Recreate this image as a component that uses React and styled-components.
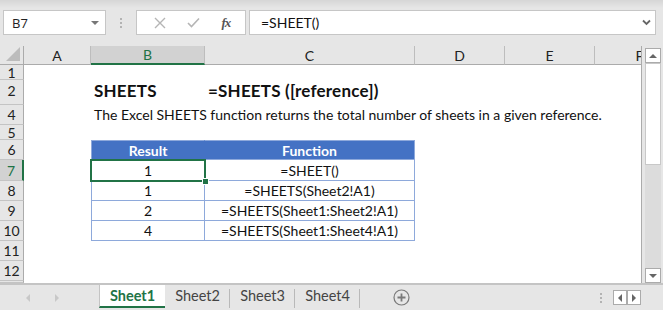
import React from 'react'
import styled, { createGlobalStyle } from 'styled-components'

const COLS = '24px 67px 114px 210px 90px 90px 90px'
const GREEN = '#217346'
const CELL_FONT = 'Lato, "Open Sans", sans-serif'
const UI_FONT = '"Open Sans", "Noto Sans", sans-serif'

const GlobalStyle = createGlobalStyle`
  html, body {
    margin: 0;
    padding: 0;
    background: #e6e6e6;
    overflow: hidden;
  }
`

const Window = styled.div`
  width: 663px;
  height: 310px;
  display: flex;
  flex-direction: column;
  background: #e6e6e6;
  font-family: ${CELL_FONT};
  overflow: hidden;
`

const FormulaBar = styled.div`
  height: 46px;
  box-sizing: border-box;
  padding-top: 10px;
  display: flex;
  align-items: flex-start;
  background: linear-gradient(#d6d6d6 0px, #e6e6e6 8px);
`

const Box = styled.div`
  height: 25px;
  box-sizing: border-box;
  background: #fff;
  border: 1px solid #c6c6c6;
  display: flex;
  align-items: center;
`

const NameBox = styled(Box)`
  margin-left: 3px;
  width: 103px;
  padding: 0 6px 0 8px;
  justify-content: space-between;
  font-family: ${UI_FONT};
  font-size: 13px;
  color: #222;
`

const Caret = styled.span`
  width: 0;
  height: 0;
  border-left: 4px solid transparent;
  border-right: 4px solid transparent;
  border-top: 4px solid #777;
`

const Grip = styled.div`
  width: 30px;
  height: 25px;
  display: flex;
  flex-direction: column;
  align-items: center;
  justify-content: center;
  gap: 2px;
  span {
    width: 2px;
    height: 2px;
    background: #b3b3b3;
  }
`

const ButtonsBox = styled(Box)`
  width: 110px;
  margin-right: 3px;
  justify-content: space-around;
  padding: 0 4px 0 6px;
`

const Fx = styled.span`
  font-family: "Liberation Serif", serif;
  font-style: italic;
  font-weight: bold;
  font-size: 13px;
  color: #555;
  letter-spacing: -1px;
`

const FormulaInput = styled(Box)`
  width: 407px;
  padding: 0 4px 0 11px;
  justify-content: space-between;
  font-family: ${CELL_FONT};
  font-size: 14px;
  color: #111;
`

const SheetArea = styled.div`
  height: 237px;
  display: flex;
`

const Grid = styled.div`
  width: 642px;
  height: 237px;
  overflow: hidden;
  background: #fff;
  border-right: 1px solid #ababab;
  box-sizing: border-box;
`

const Row = styled.div`
  display: grid;
  grid-template-columns: ${COLS};
  height: ${({ $h }) => $h}px;
`

const HeaderRow = styled(Row)`
  background: #e6e6e6;
`

const Corner = styled.div`
  border-right: 1px solid #ababab;
  border-bottom: 1px solid #ababab;
  display: flex;
  align-items: flex-end;
  justify-content: flex-end;
  padding: 0 3px 3px 0;
`

const ColHead = styled.div`
  display: flex;
  align-items: center;
  justify-content: center;
  font-size: 14px;
  color: ${({ $active }) => ($active ? GREEN : '#222')};
  background: ${({ $active }) => ($active ? '#d2d2d2' : '#e6e6e6')};
  border-right: 1px solid #bdbdbd;
  border-bottom: ${({ $active }) => ($active ? `2px solid ${GREEN}` : '1px solid #ababab')};
  box-sizing: border-box;
`

const RowHead = styled.div`
  display: flex;
  align-items: center;
  justify-content: center;
  font-size: 14px;
  overflow: hidden;
  color: ${({ $active }) => ($active ? GREEN : '#222')};
  background: ${({ $active }) => ($active ? '#d2d2d2' : '#e6e6e6')};
  border-right: ${({ $active }) => ($active ? `2px solid ${GREEN}` : '1px solid #ababab')};
  border-bottom: 1px solid #c4c4c4;
  box-sizing: border-box;
`

const Cell = styled.div`
  grid-column: ${({ $col, $span }) => `${$col} / span ${$span || 1}`};
  display: flex;
  align-items: flex-end;
  padding: 0 0 ${({ $big }) => ($big ? 1 : 2)}px 3px;
  white-space: nowrap;
  font-size: ${({ $big }) => ($big ? '17px' : '14px')};
  font-weight: ${({ $big }) => ($big ? 700 : 400)};
  letter-spacing: ${({ $big }) => ($big ? '0.2px' : 'normal')};
  color: #111;
`

const TableCell = styled.div`
  grid-column: ${({ $col }) => $col};
  position: relative;
  display: flex;
  align-items: center;
  justify-content: center;
  font-size: 14px;
  white-space: nowrap;
  box-sizing: border-box;
  border-right: 1px solid ${({ $head, $col }) => ($head && $col === 3 ? '#4472c4' : '#8ea9db')};
  border-bottom: 1px solid #8ea9db;
  border-left: ${({ $col }) => ($col === 3 ? '1px solid #8ea9db' : 'none')};
  border-top: ${({ $head }) => ($head ? '1px solid #8ea9db' : 'none')};
  background: ${({ $head }) => ($head ? '#4472c4' : '#fff')};
  color: ${({ $head }) => ($head ? '#fff' : '#111')};
  font-weight: ${({ $head }) => ($head ? 700 : 400)};
`

const Selection = styled.div`
  position: absolute;
  z-index: 2;
  left: -2px;
  top: -1px;
  right: -2px;
  bottom: -2px;
  border: 2px solid ${GREEN};
  pointer-events: none;
`

const Handle = styled.div`
  position: absolute;
  right: -5px;
  bottom: -5px;
  width: 5px;
  height: 5px;
  background: ${GREEN};
  border: 1px solid #fff;
`

const VScroll = styled.div`
  width: 21px;
  display: flex;
  flex-direction: column;
  padding: 2px 0 0 3px;
  box-sizing: border-box;
`

const ScrollTrack = styled.div`
  width: 16px;
  flex: 1;
  display: flex;
  flex-direction: column;
  background: #dcdcdc;
`

const ScrollBtn = styled.div`
  width: ${({ $w }) => $w || 16}px;
  height: ${({ $h }) => $h || 15}px;
  box-sizing: border-box;
  background: #fff;
  border: 1px solid #ababab;
  display: flex;
  align-items: center;
  justify-content: center;
`

const Thumb = styled.div`
  height: 102px;
  background: #fff;
  border: 1px solid #c8c8c8;
  box-sizing: border-box;
`

const Spacer = styled.div`
  flex: 1;
`

const Tri = styled.span`
  width: 0;
  height: 0;
  ${({ $dir, $c = '#777', $s = 4 }) =>
    $dir === 'up'
      ? `border-left:${$s}px solid transparent;border-right:${$s}px solid transparent;border-bottom:${$s}px solid ${$c};`
      : $dir === 'down'
      ? `border-left:${$s}px solid transparent;border-right:${$s}px solid transparent;border-top:${$s}px solid ${$c};`
      : $dir === 'left'
      ? `border-top:${$s}px solid transparent;border-bottom:${$s}px solid transparent;border-right:${$s}px solid ${$c};`
      : `border-top:${$s}px solid transparent;border-bottom:${$s}px solid transparent;border-left:${$s}px solid ${$c};`}
`

const TabBar = styled.div`
  height: 27px;
  display: flex;
  align-items: stretch;
  border-top: 2px solid #c4c4c4;
  box-sizing: border-box;
  font-family: ${CELL_FONT};
`

const TabNav = styled.div`
  width: 99px;
  display: flex;
  align-items: center;
  gap: 25px;
  padding-left: 26px;
  box-sizing: border-box;
`

const Tab = styled.div`
  width: ${({ $active }) => ($active ? 66 : 65)}px;
  box-sizing: border-box;
  display: flex;
  align-items: center;
  justify-content: center;
  font-size: 14.5px;
  margin-bottom: 2px;
  color: ${({ $active }) => ($active ? GREEN : '#444')};
  font-weight: ${({ $active }) => ($active ? 700 : 400)};
  background: ${({ $active }) => ($active ? '#fff' : 'transparent')};
  border-bottom: 2px solid ${({ $active }) => ($active ? GREEN : 'transparent')};
  border-left: ${({ $active }) => ($active ? '1px solid #c4c4c4' : 'none')};
  position: relative;
  &::after {
    content: '';
    display: ${({ $active }) => ($active ? 'none' : 'block')};
    position: absolute;
    right: 0;
    top: 4px;
    bottom: -2px;
    width: 1px;
    background: #b9b9b9;
  }
`

const AddSheet = styled.div`
  margin-left: 33px;
  display: flex;
  align-items: center;
`

const HScrollArrows = styled.div`
  display: flex;
  align-items: center;
  margin-right: 22px;
  margin-left: 11px;
`

const TabGrip = styled(Grip)`
  width: auto;
  height: auto;
  margin-top: 1px;
`

const rows = [
  { n: 1, h: 15 },
  {
    n: 2,
    h: 20,
    cells: [
      { col: 3, text: 'SHEETS', big: true },
      { col: 4, span: 3, text: '=SHEETS ([reference])', big: true },
    ],
  },
  { n: 3, h: 5 },
  {
    n: 4,
    h: 20,
    cells: [
      {
        col: 3,
        span: 5,
        text: 'The Excel SHEETS function returns the total number of sheets in a given reference.',
      },
    ],
  },
  { n: 5, h: 15 },
  { n: 6, h: 20, table: ['Result', 'Function'], head: true },
  { n: 7, h: 21, table: ['1', '=SHEET()'], active: true },
  { n: 8, h: 20, table: ['1', '=SHEETS(Sheet2!A1)'] },
  { n: 9, h: 20, table: ['2', '=SHEETS(Sheet1:Sheet2!A1)'] },
  { n: 10, h: 20, table: ['4', '=SHEETS(Sheet1:Sheet4!A1)'] },
  { n: 11, h: 20 },
  { n: 12, h: 20 },
  { n: 13, h: 2 },
]

const cols = ['A', 'B', 'C', 'D', 'E', 'F']

export default function App() {
  return (
    <Window>
      <GlobalStyle />
      <FormulaBar>
        <NameBox>
          <span>B7</span>
          <Caret />
        </NameBox>
        <Grip>
          <span />
          <span />
          <span />
        </Grip>
        <ButtonsBox>
          <svg width="12" height="12" viewBox="0 0 12 12">
            <path d="M1 1L11 11M11 1L1 11" stroke="#b5b5b5" strokeWidth="1.4" fill="none" />
          </svg>
          <svg width="13" height="11" viewBox="0 0 13 11">
            <path d="M1 6L4.5 9.5L12 1.5" stroke="#b5b5b5" strokeWidth="1.6" fill="none" />
          </svg>
          <Fx>fx</Fx>
        </ButtonsBox>
        <FormulaInput>
          <span>=SHEET()</span>
          <svg width="9" height="7" viewBox="0 0 9 7">
            <path d="M1 1.5L4.5 5L8 1.5" stroke="#666" strokeWidth="1.8" fill="none" />
          </svg>
        </FormulaInput>
      </FormulaBar>

      <SheetArea>
        <Grid>
          <HeaderRow $h={19}>
            <Corner>
              <svg width="14" height="14" viewBox="0 0 14 14">
                <path d="M14 0L14 14L0 14Z" fill="#bcbcbc" />
              </svg>
            </Corner>
            {cols.map((c) => (
              <ColHead key={c} $active={c === 'B'}>
                {c}
              </ColHead>
            ))}
          </HeaderRow>
          {rows.map((r) => (
            <Row key={r.n} $h={r.h}>
              <RowHead $active={r.active}>{r.h > 8 ? r.n : ''}</RowHead>
              {r.cells &&
                r.cells.map((c) => (
                  <Cell key={c.col} $col={c.col} $span={c.span} $big={c.big}>
                    {c.text}
                  </Cell>
                ))}
              {r.table &&
                r.table.map((t, i) => (
                  <TableCell key={i} $col={i + 3} $head={r.head}>
                    {t}
                    {r.active && i === 0 && (
                      <Selection>
                        <Handle />
                      </Selection>
                    )}
                  </TableCell>
                ))}
            </Row>
          ))}
        </Grid>
        <VScroll>
          <ScrollTrack>
            <ScrollBtn>
              <Tri $dir="up" $c="#666" />
            </ScrollBtn>
            <Thumb />
            <Spacer />
            <ScrollBtn>
              <Tri $dir="down" $c="#666" />
            </ScrollBtn>
          </ScrollTrack>
        </VScroll>
      </SheetArea>

      <TabBar>
        <TabNav>
          <Tri $dir="left" $c="#c8c8c8" />
          <Tri $dir="right" $c="#c8c8c8" />
        </TabNav>
        <Tab $active>Sheet1</Tab>
        <Tab>Sheet2</Tab>
        <Tab>Sheet3</Tab>
        <Tab>Sheet4</Tab>
        <AddSheet>
          <svg width="17" height="17" viewBox="0 0 17 17">
            <circle cx="8.5" cy="8.5" r="7.5" stroke="#7a7a7a" strokeWidth="1.2" fill="none" />
            <path d="M8.5 4.5V12.5M4.5 8.5H12.5" stroke="#7a7a7a" strokeWidth="1.8" />
          </svg>
        </AddSheet>
        <Spacer />
        <TabGrip>
          <span />
          <span />
          <span />
        </TabGrip>
        <HScrollArrows>
          <ScrollBtn $w={14} $h={15}>
            <Tri $dir="left" $c="#666" />
          </ScrollBtn>
          <ScrollBtn $w={14} $h={15}>
            <Tri $dir="right" $c="#666" />
          </ScrollBtn>
        </HScrollArrows>
      </TabBar>
    </Window>
  )
}
